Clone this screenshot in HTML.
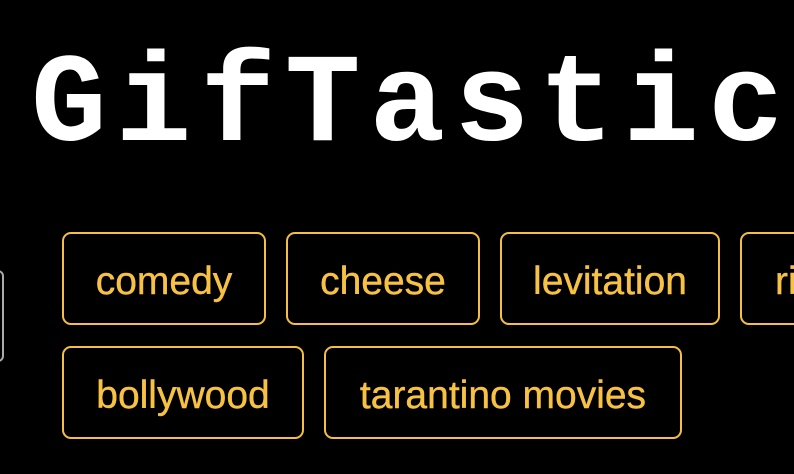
<!DOCTYPE html>
<html><head><style>
body{margin:0;background:#000;width:794px;height:474px;overflow:hidden;position:relative;font-family:"Liberation Sans",sans-serif}
h1{position:absolute;left:31px;top:32px;margin:0;font-family:"Liberation Mono",monospace;font-weight:bold;font-size:126px;letter-spacing:9px;color:#fff;white-space:nowrap;line-height:150px}
.b{position:absolute;border:2px solid #f4bf42;border-radius:9px;color:#f7c243;font-size:39px;display:flex;align-items:center;justify-content:center;box-sizing:border-box;height:93px;white-space:nowrap;overflow:hidden;padding-top:7px;-webkit-text-stroke:0.4px #f7c243}
.l{position:absolute;left:-10px;top:270px;width:10px;height:88px;border:2px solid #aaa;border-radius:6px}
</style></head><body>
<h1>GifTastic</h1>
<div class="l"></div>
<div class="b" style="left:62px;top:232px;width:204px">comedy</div>
<div class="b" style="left:286px;top:232px;width:194px">cheese</div>
<div class="b" style="left:500px;top:232px;width:220px">levitation</div>
<div class="b" style="left:740px;top:232px;width:120px;justify-content:flex-start;padding-left:33px">ri</div>
<div class="b" style="left:62px;top:346px;width:242px">bollywood</div>
<div class="b" style="left:324px;top:346px;width:358px">tarantino movies</div>
</body></html>
